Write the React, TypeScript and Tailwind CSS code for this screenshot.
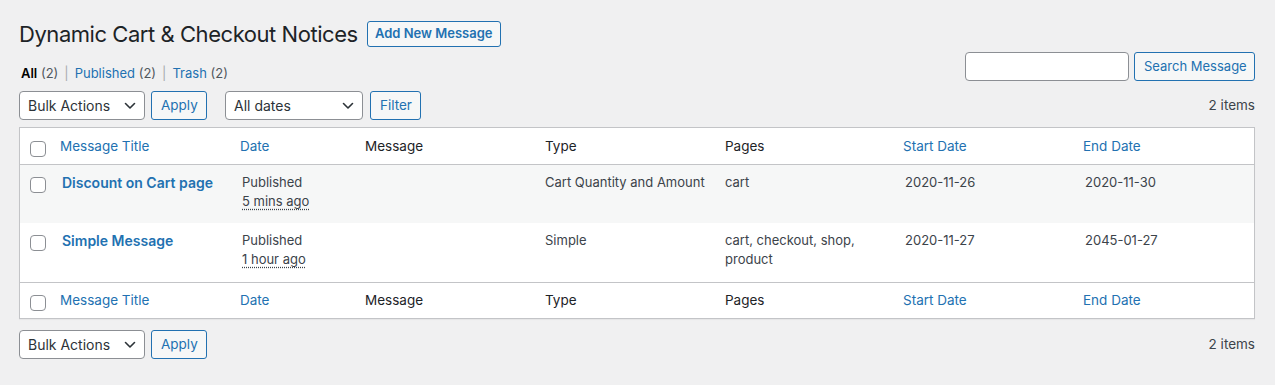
import React from 'react';

const Chevron: React.FC = () => (
  <svg width="12" height="8" viewBox="0 0 12 8" fill="none" className="shrink-0">
    <path d="M1.5 1.5L6 6l4.5-4.5" stroke="#2c3338" strokeWidth="1.6" strokeLinecap="round" strokeLinejoin="round" />
  </svg>
);

const Select: React.FC<{ label: string; width: string }> = ({ label, width }) => (
  <div
    className={`${width} h-[29px] bg-white border border-[#8c8f94] rounded-[4px] flex items-center justify-between pl-[8px] pr-[8px] text-[14px] text-[#2c3338]`}
  >
    <span>{label}</span>
    <Chevron />
  </div>
);

const Button: React.FC<{ label: string; className?: string }> = ({ label, className = '' }) => (
  <button
    className={`h-[29px] px-[9px] bg-[#f6f7f7] border border-[#2271b1] rounded-[3px] text-[#2271b1] text-[13.5px] leading-none whitespace-nowrap ${className}`}
  >
    {label}
  </button>
);

const Check: React.FC = () => (
  <span className="block w-[16px] h-[16px] bg-white border border-[#8c8f94] rounded-[4px]" />
);

const HeaderRow: React.FC<{ top?: boolean }> = ({ top }) => (
  <tr className={top ? 'border-b border-[#c3c4c7]' : 'border-t border-[#c3c4c7]'}>
    <th className={`h-[36px] pl-[10px] pr-0 align-top ${top ? 'pt-[13px]' : 'pt-[12px]'}`}>
      <Check />
    </th>
    <th className="px-[8px] text-left font-normal text-[#2271b1]">Message Title</th>
    <th className="px-[8px] text-left font-normal text-[#2271b1]">Date</th>
    <th className="px-[8px] text-left font-normal text-[#1d2327]">Message</th>
    <th className="px-[8px] text-left font-normal text-[#1d2327]">Type</th>
    <th className="px-[8px] text-left font-normal text-[#1d2327]">Pages</th>
    <th className="px-[8px] text-left font-normal text-[#2271b1]">Start Date</th>
    <th className="px-[8px] text-left font-normal text-[#2271b1]">End Date</th>
  </tr>
);

const rows = [
  {
    title: 'Discount on Cart page',
    ago: '5 mins ago',
    type: 'Cart Quantity and Amount',
    pages: 'cart',
    start: '2020-11-26',
    end: '2020-11-30',
    alt: true,
  },
  {
    title: 'Simple Message',
    ago: '1 hour ago',
    type: 'Simple',
    pages: 'cart, checkout, shop, product',
    start: '2020-11-27',
    end: '2045-01-27',
    alt: false,
  },
];

const App: React.FC = () => {
  return (
    <div className="min-h-[385px] bg-[#f0f0f1] font-[Inter,sans-serif] text-[14px] text-[#3c434a] pl-[19px] pr-[20px] pt-[21px]">
      {/* Heading */}
      <div className="flex items-center h-[26px]">
        <h1 className="text-[22px] leading-[26px] text-[#1d2327] tracking-[-0.45px]">Dynamic Cart &amp; Checkout Notices</h1>
        <button className="ml-[9px] h-[26px] w-[134px] border border-[#2271b1] rounded-[3px] text-[#2271b1] text-[13px] font-semibold bg-[#f6f7f7] whitespace-nowrap">
          Add New Message
        </button>
      </div>

      {/* Views + search */}
      <div className="flex justify-between items-start">
        <ul className="mt-[17px] flex items-center leading-[19px] text-[13px] pl-[2px]">
          <li>
            <span className="font-semibold text-black">All</span> <span className="text-[#50575e]">(2)</span>
            <span className="text-[#a7aaad] mx-[6px]">|</span>
          </li>
          <li>
            <span className="text-[#2271b1]">Published</span> <span className="text-[#50575e]">(2)</span>
            <span className="text-[#a7aaad] mx-[6px]">|</span>
          </li>
          <li>
            <span className="text-[#2271b1]">Trash</span> <span className="text-[#50575e]">(2)</span>
          </li>
        </ul>
        <div className="mt-[5px] flex items-center gap-[5px]">
          <div className="w-[164px] h-[29px] bg-white border border-[#8c8f94] rounded-[4px]" />
          <Button label="Search Message" className="w-[121px] px-0 text-[13px]" />
        </div>
      </div>

      {/* Top tablenav */}
      <div className="mt-[8px] flex items-center">
        <Select label="Bulk Actions" width="w-[126px]" />
        <Button label="Apply" className="ml-[6px] w-[56px] px-0" />
        <div className="ml-[18px]">
          <Select label="All dates" width="w-[138px]" />
        </div>
        <Button label="Filter" className="ml-[7px] w-[51px] px-0" />
        <span className="ml-auto text-[13.5px] text-[#3c434a]">2 items</span>
      </div>

      {/* Table */}
      <div className="mt-[7px] bg-white border border-[#c3c4c7] shadow-[0_1px_1px_rgba(0,0,0,0.04)]">
        <table className="w-full table-fixed border-collapse text-[13.5px]">
          <colgroup>
            <col className="w-[32px]" />
            <col className="w-[180px]" />
            <col className="w-[125px]" />
            <col className="w-[180px]" />
            <col className="w-[180px]" />
            <col className="w-[178px]" />
            <col className="w-[180px]" />
            <col />
          </colgroup>
          <thead>
            <HeaderRow top />
          </thead>
          <tbody>
            {rows.map((r) => (
              <tr key={r.title} className={r.alt ? 'bg-[#f6f7f7]' : 'bg-white'}>
                <td className="h-[59px] align-top pl-[10px] pt-[12px]">
                  <Check />
                </td>
                <td className="align-top px-[10px] pt-[8px] leading-[19px]">
                  <span className="font-semibold text-[#2271b1] text-[14px]">{r.title}</span>
                </td>
                <td className="align-top px-[10px] pt-[8px] leading-[19px] text-[13px]">
                  <div>Published</div>
                  <div className="underline decoration-dotted underline-offset-[3px]">{r.ago}</div>
                </td>
                <td className="align-top px-[10px] pt-[8px]" />
                <td className="align-top px-[8px] pt-[8px] leading-[19px] text-[13px]">{r.type}</td>
                <td className="align-top px-[8px] pt-[8px] leading-[19px] text-[13px]">{r.pages}</td>
                <td className="align-top px-[10px] pt-[8px] leading-[19px] text-[13px]">{r.start}</td>
                <td className="align-top px-[10px] pt-[8px] leading-[19px] text-[13px]">{r.end}</td>
              </tr>
            ))}
          </tbody>
          <tfoot>
            <HeaderRow />
          </tfoot>
        </table>
      </div>

      {/* Bottom tablenav */}
      <div className="mt-[11px] flex items-center">
        <Select label="Bulk Actions" width="w-[126px]" />
        <Button label="Apply" className="ml-[6px] w-[56px] px-0" />
        <span className="ml-auto text-[13.5px] text-[#3c434a]">2 items</span>
      </div>
    </div>
  );
};

export default App;
